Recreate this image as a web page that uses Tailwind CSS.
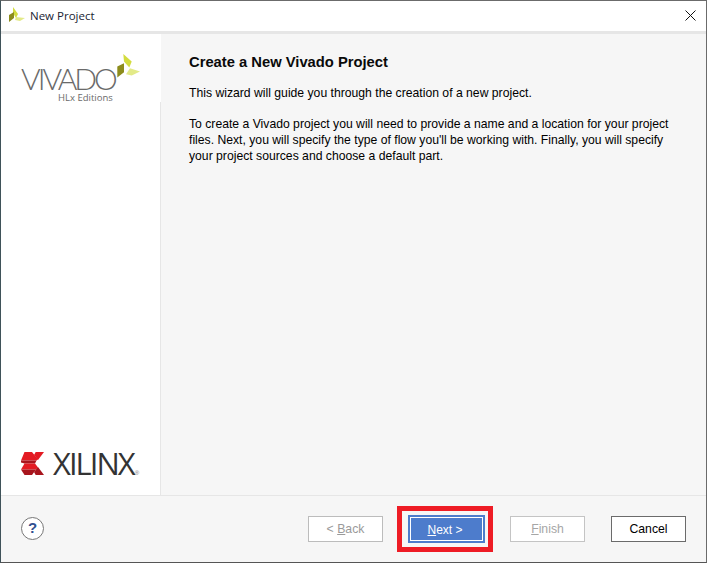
<!DOCTYPE html>
<html lang="en">
<head>
    <meta charset="UTF-8">
    <title>New Project</title>
    <script src="https://cdn.jsdelivr.net/npm/@tailwindcss/browser@4"></script>
</head>
<body class="w-[707px] h-[563px] overflow-hidden bg-white font-['Liberation_Sans',Arial,sans-serif]">
    <div class="h-[563px] flex flex-col border-t border-l border-r border-b border-t-[#6b6b6b] border-l-[#3f5259] border-r-[#6b6b6b] border-b-[#555555]">
        <!-- Title bar -->
        <div class="h-[30px] shrink-0 flex items-center bg-white pl-[8px] pr-[10px]">
            <svg width="17" height="17" viewBox="0 0 17 17" class="shrink-0 self-start mt-[6px]">
                <path d="M4 0L9 7L7 11L4 6Z" fill="#d3dc3f"/>
                <path d="M7 10L16 11L11 14L6 13Z" fill="#e3ea88"/>
                <path d="M0 8L5 5V11L0 15Z" fill="#8c8c1c"/>
            </svg>
            <span class="ml-[4px] text-[11.5px] text-[#1a2433] font-['Open_Sans',sans-serif]">New Project</span>
            <svg width="11" height="11" viewBox="0 0 11 11" class="ml-auto mb-[2px]">
                <path d="M0.5 0.5L10.5 10.5M10.5 0.5L0.5 10.5" stroke="#111111" stroke-width="1" fill="none"/>
            </svg>
        </div>
        <div class="h-[3px] shrink-0 bg-[#e6e6e6]"></div>

        <!-- Body -->
        <div class="flex-1 flex min-h-0">
            <aside class="relative w-[160px] shrink-0 flex flex-col justify-between bg-white pl-[20px]">
                <div class="absolute right-0 top-[68px] bottom-0 w-px bg-[#e6e6e6]"></div>
                <div class="relative h-[70px] mt-[20px]">
                    <span class="absolute left-0 top-[12px] text-[30px] leading-[24px] tracking-[-3px] text-[#6a6a6a] font-['Lato',sans-serif] font-light">VIVADO</span>
                    <span class="absolute left-[37px] top-[38px] text-[9.5px] leading-[12px] text-[#6a6a6a] font-['Open_Sans',sans-serif]">HLx Editions</span>
                    <svg width="25" height="26" viewBox="0 0 25 26" class="absolute left-[96px] top-0">
                        <path d="M6.3 0L14.7 7.6L12.3 13.6L7 7.6Z" fill="#d3dc3f"/>
                        <path d="M13 14.3L23 17.6L14.7 21.6L9 20.3Z" fill="#e3ea88"/>
                        <path d="M0.3 12.6L7 9.3V18.3L0.3 23.6Z" fill="#8c8c1c"/>
                    </svg>
                </div>
                <div class="flex items-center mb-[17px] h-[30px]">
                    <svg width="23" height="23" viewBox="0 0 23 23" class="shrink-0">
                        <path d="M3.5 0H11L17 7.5L15.5 8.5H0Z" fill="#e31b23"/>
                        <path d="M0 8.5H15.5L14 11.5H3.5L0 10.5Z" fill="#a8151d"/>
                        <path d="M3.5 11.5H14L17 15.5L15 17.5H0Z" fill="#e31b23"/>
                        <path d="M0 17.5H15L11 23H3.5Z" fill="#a8151d"/>
                        <path d="M14.7 0H23L17 8L13 3Z" fill="#e31b23"/>
                        <path d="M14.7 23H23L17 15L13 20Z" fill="#a8151d"/>
                    </svg>
                    <span class="ml-[9px] text-[31px] leading-[30px] tracking-[-2px] text-[#333333] font-['Open_Sans',sans-serif]">XILINX</span>
                    <span class="self-end mb-[2px] ml-[1px] text-[6px] leading-[6px] text-[#777777]">®</span>
                </div>
            </aside>
            <main class="flex-1 bg-[#f6f6f6] pl-[28px] pr-[20px] pt-[19px] text-[#000000]">
                <h1 class="text-[14.75px] leading-[18px] font-bold text-[#0a0a0a]">Create a New Vivado Project</h1>
                <p class="mt-[14px] text-[12.2px] leading-[16px]">This wizard will guide you through the creation of a new project.</p>
                <p class="mt-[15px] text-[12.2px] leading-[16px] w-[490px]">To create a Vivado project you will need to provide a name and a location for your project files. Next, you will specify the type of flow you'll be working with. Finally, you will specify your project sources and choose a default part.</p>
            </main>
        </div>

        <!-- Footer -->
        <footer class="h-[67px] shrink-0 flex items-center bg-[#f6f6f6] border-t border-[#e6e6e6] pl-[20px] pr-[20px]">
            <div class="w-[23px] h-[23px] mb-[2px] rounded-full border border-[#777777] bg-white flex items-center justify-center text-[15px] font-bold text-[#2f4f8f]">?</div>
            <div class="ml-auto flex items-center">
                <button class="w-[75px] h-[26px] pt-px bg-white border border-[#bcbcbc] text-[12.25px] text-[#9a9a9a]">&lt; <u>B</u>ack</button>
                <div class="ml-[14px] pl-[6px] pr-[3px] py-[4px] border-[5px] border-[#ee1c25] bg-[#f6f6f6]">
                    <button class="block w-[77px] h-[28px] pt-px pr-[3px] bg-[#4d7ccc] outline outline-1 -outline-offset-3 outline-white text-[12px] text-white"><u>N</u>ext &gt;</button>
                </div>
                <button class="ml-[17px] w-[75px] h-[26px] pt-px bg-white border border-[#c4c4c4] text-[12.25px] text-[#a6a6a6]"><u>F</u>inish</button>
                <button class="ml-[26px] w-[75px] h-[26px] pt-px bg-white border border-[#6b6b6b] text-[12.25px] text-black">Cancel</button>
            </div>
        </footer>
    </div>
</body>
</html>
